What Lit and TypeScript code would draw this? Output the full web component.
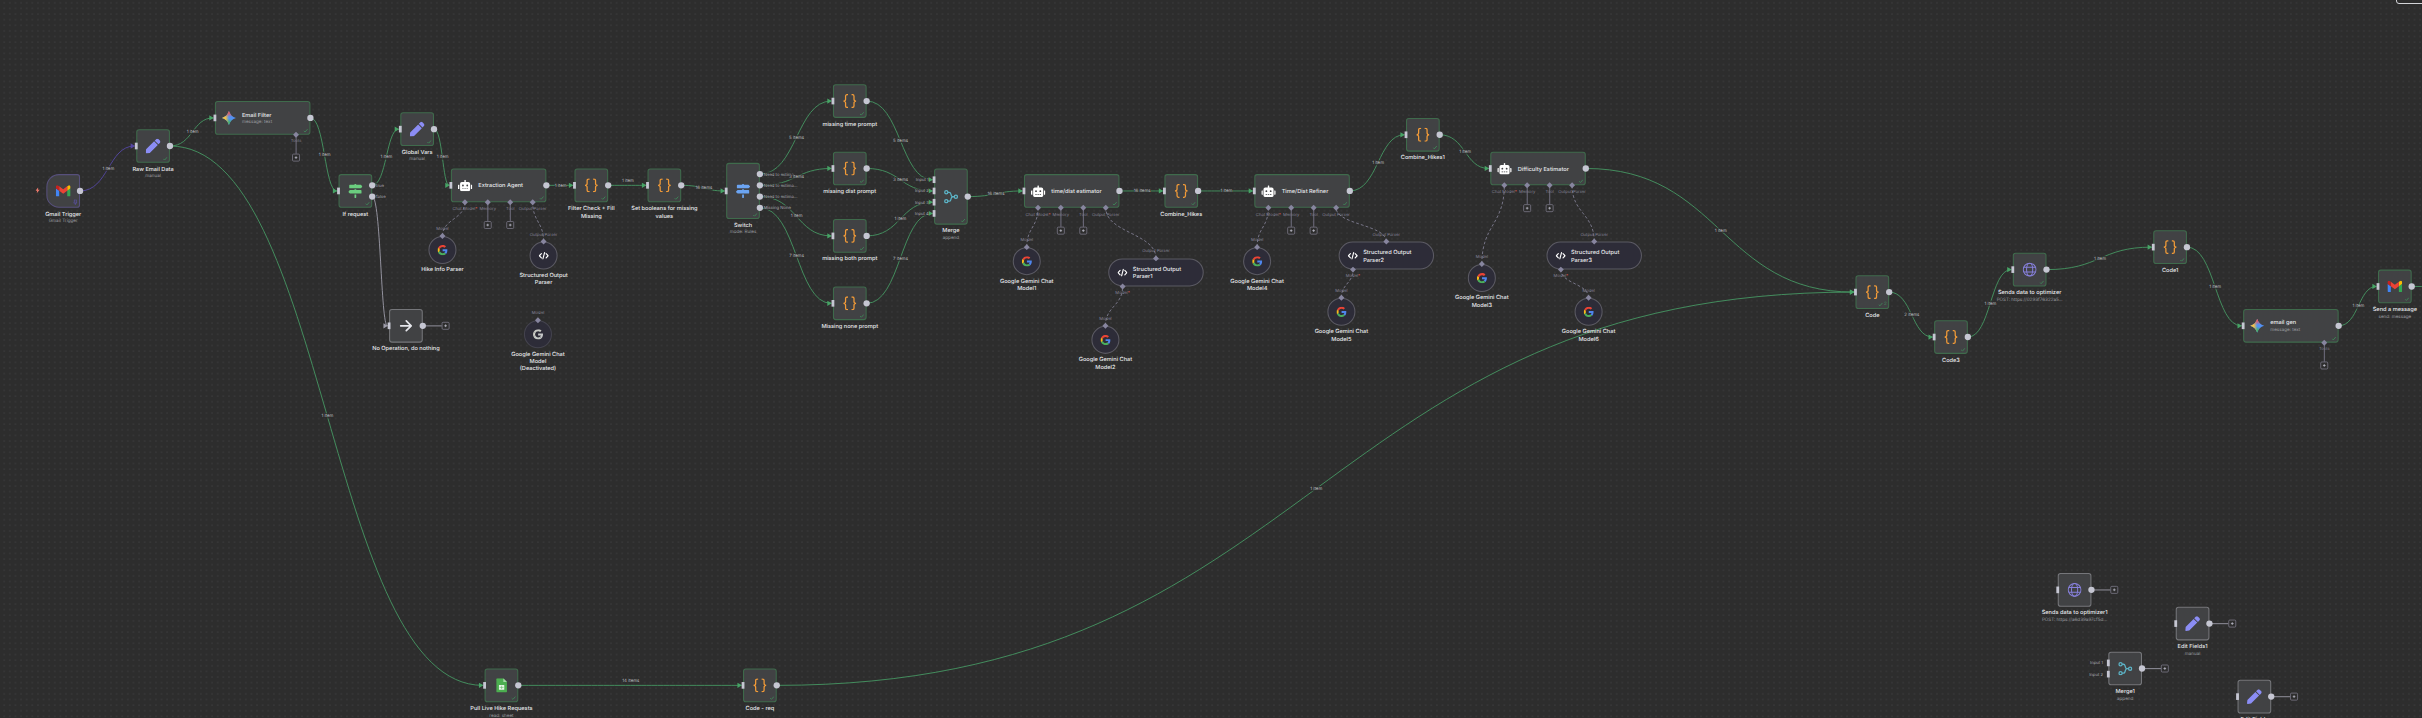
import { LitElement, html, svg, css, nothing, type TemplateResult } from "lit";
import { customElement, property } from "lit/decorators.js";
import { classMap } from "lit/directives/class-map.js";
import { styleMap } from "lit/directives/style-map.js";

const GRID = 16;
const SCALE = 0.35115;
const ORIGIN_X = 46.35;
const ORIGIN_Y = 174.1;

type Kind = "step" | "trigger" | "wide" | "circle" | "pill";
type Tone = "success" | "pinned" | "idle" | "off";

interface FlowNode {
  id: string;
  kind?: Kind;
  tone?: Tone;
  icon: string;
  x: number;
  y: number;
  h?: number;
  title: string;
  sub?: string;
  runs?: string;
  ins?: string[];
  outs?: string[];
  ports?: [number, string, boolean][];
  top?: string;
  plus?: boolean;
}

interface Edge {
  from: string;
  to: string;
  text?: string;
  out?: number;
  inp?: number;
  tone?: string;
  above?: boolean;
}

const AGENT: [number, string, boolean][] = [
  [40, "Chat Model*", false],
  [105, "Memory", true],
  [169, "Tool", true],
  [233, "Output Parser", false],
];
const TOOLS: [number, string, boolean][] = [[231, "Tools", true]];
const NEED = "Need to estima...";

const gem = (id: string, x: number, y: number, n: string): FlowNode => ({
  id, kind: "circle", icon: "google", x, y, title: `Google Gemini Chat\nModel${n}`, top: "Model",
});
const parser = (id: string, x: number, y: number, n: string): FlowNode => ({
  id, kind: "pill", icon: "code", x, y, title: `Structured Output\nParser${n}`, top: "Output Parser",
  ports: [[41, "Model*", false]],
});
const code = (id: string, x: number, y: number, title: string, runs = ""): FlowNode => ({
  id, icon: "braces", x, y, title, runs,
});

const NODES: FlowNode[] = [
  { id: "gmail", kind: "trigger", tone: "pinned", icon: "gmail", x: 0, y: 0, title: "Gmail Trigger", sub: "Gmail Trigger", ins: [] },
  { id: "raw", icon: "pen", x: 16, y: -8, title: "Raw Email Data", sub: "manual" },
  { id: "filter", kind: "wide", icon: "gemini", x: 30, y: -13, title: "Email Filter", sub: "message: text", ports: TOOLS },
  { id: "if", icon: "signsGreen", x: 52, y: 0, title: "If request", outs: ["true", "false"] },
  { id: "global", icon: "pen", x: 63, y: -11, title: "Global Vars", sub: "manual" },
  { id: "extract", kind: "wide", icon: "robot", x: 72, y: -1, title: "Extraction Agent", ports: AGENT },
  code("check", 94, -1, "Filter Check + Fill\nMissing"),
  code("bools", 107, -1, "Set booleans for missing\nvalues"),
  { id: "noop", tone: "idle", icon: "arrow", x: 61, y: 24, title: "No Operation, do nothing", plus: true },
  { id: "hike", kind: "circle", icon: "google", x: 68, y: 11, title: "Hike Info Parser", top: "Model" },
  { id: "sop", kind: "circle", icon: "code", x: 86, y: 12, title: "Structured Output\nParser", top: "Output Parser" },
  { id: "off", kind: "circle", tone: "off", icon: "googleOff", x: 85, y: 26, title: "Google Gemini Chat\nModel\n(Deactivated)", top: "Model" },
  { id: "switch", icon: "signsBlue", x: 121, y: -2, h: 160, title: "Switch", sub: "mode: Rules", outs: [NEED, NEED, NEED, "Missing None"] },
  code("mt", 140, -16, "missing time prompt"),
  code("md", 140, -4, "missing dist prompt"),
  code("mb", 140, 8, "missing both prompt"),
  code("mn", 140, 20, "Missing none prompt"),
  { id: "merge", icon: "merge", x: 158, y: -1, h: 160, title: "Merge", sub: "append", ins: ["Input 1", "Input 2", "Input 3", "Input 4"] },
  { id: "tde", kind: "wide", icon: "robot", x: 174, y: 0, title: "time/dist estimator", ports: AGENT },
  code("ch", 199, 0, "Combine_Hikes"),
  { id: "tdr", kind: "wide", icon: "robot", x: 215, y: 0, title: "Time/Dist Refiner", ports: AGENT },
  code("ch1", 242, -10, "Combine_Hikes1"),
  { id: "diff", kind: "wide", icon: "robot", x: 257, y: -4, title: "Difficulty Estimator", ports: AGENT },
  code("code", 322, 18, "Code", "2"),
  code("code3", 336, 26, "Code3"),
  { id: "send", icon: "globe", x: 350, y: 14, title: "Sends data to optimizer", sub: "POST: https://0293f76322a5..." },
  code("code1", 375, 10, "Code1"),
  { id: "gen", kind: "wide", icon: "gemini", x: 391, y: 24, title: "email gen", sub: "message: text", ports: TOOLS },
  { id: "msg", icon: "gmail", x: 415, y: 17, title: "Send a message", sub: "send: message" },
  { id: "send1", tone: "idle", icon: "globe", x: 358, y: 71, title: "Sends data to optimizer1", sub: "POST: https://a6d39a97cf5d...", plus: true },
  { id: "ef1", tone: "idle", icon: "pen", x: 379, y: 77, title: "Edit Fields1", sub: "manual", plus: true },
  { id: "merge1", tone: "idle", icon: "merge", x: 367, y: 85, title: "Merge1", sub: "append", ins: ["Input 1", "Input 2"], plus: true },
  { id: "ef", tone: "idle", icon: "pen", x: 390, y: 90, title: "Edit Fields", plus: true },
  { id: "sheet", icon: "sheet", x: 78, y: 88, title: "Pull Live Hike Requests", sub: "read: sheet" },
  code("req", 124, 88, "Code - req"),
  gem("m1", 172, 13, "1"),
  gem("m2", 186, 27, "2"),
  gem("m4", 213, 13, "4"),
  gem("m5", 228, 22, "5"),
  gem("m3", 253, 16, "3"),
  gem("m6", 272, 22, "6"),
  parser("p1", 189, 15, "1"),
  parser("p2", 230, 12, "2"),
  parser("p3", 267, 12, "3"),
  { id: "next", icon: "pen", x: 440, y: 17, title: "" },
];

const EDGES: Edge[] = [
  { from: "gmail", to: "raw", text: "1 item", tone: "pinned" },
  { from: "raw", to: "filter", text: "1 item" },
  { from: "raw", to: "sheet", text: "1 item" },
  { from: "filter", to: "if", text: "1 item" },
  { from: "if", to: "global", text: "1 item" },
  { from: "if", to: "noop", out: 1, tone: "idle" },
  { from: "global", to: "extract", text: "1 item" },
  { from: "extract", to: "check", text: "1 item" },
  { from: "check", to: "bools", text: "1 item", above: true },
  { from: "bools", to: "switch", text: "16 items" },
  { from: "switch", to: "mt", text: "5 items" },
  { from: "switch", to: "md", text: "3 items", out: 1 },
  { from: "switch", to: "mb", text: "1 item", out: 2 },
  { from: "switch", to: "mn", text: "7 items", out: 3 },
  { from: "mt", to: "merge", text: "5 items" },
  { from: "md", to: "merge", text: "3 items", inp: 1 },
  { from: "mb", to: "merge", text: "1 item", inp: 2 },
  { from: "mn", to: "merge", text: "7 items", inp: 3 },
  { from: "merge", to: "tde", text: "16 items" },
  { from: "tde", to: "ch", text: "16 items" },
  { from: "ch", to: "tdr", text: "1 item" },
  { from: "tdr", to: "ch1", text: "1 item" },
  { from: "ch1", to: "diff", text: "1 item" },
  { from: "diff", to: "code", text: "1 item" },
  { from: "sheet", to: "req", text: "14 items", above: true },
  { from: "req", to: "code", text: "1 item" },
  { from: "code", to: "code3", text: "2 items" },
  { from: "code3", to: "send", text: "1 item" },
  { from: "send", to: "code1", text: "1 item" },
  { from: "code1", to: "gen", text: "1 item" },
  { from: "gen", to: "msg", text: "1 item" },
  { from: "msg", to: "next" },
];

/* sub-node, parent, index of the parent's bottom port */
const LINKS: [string, string, number][] = [
  ["hike", "extract", 0], ["sop", "extract", 3],
  ["m1", "tde", 0], ["p1", "tde", 3], ["m2", "p1", 0],
  ["m4", "tdr", 0], ["p2", "tdr", 3], ["m5", "p2", 0],
  ["m3", "diff", 0], ["p3", "diff", 3], ["m6", "p3", 0],
];

const byId = new Map(NODES.map((n) => [n.id, n]));
const widthOf = (n: FlowNode) => (n.kind === "wide" || n.kind === "pill" ? 272 : n.kind === "circle" ? 80 : 96);
const heightOf = (n: FlowNode) => n.h ?? (n.kind === "circle" || n.kind === "pill" ? 80 : 96);
const slot = (n: FlowNode, i: number, count: number) => heightOf(n) / 2 + (i - (count - 1) / 2) * 32;
const outPos = (n: FlowNode, i = 0) => [n.x * GRID + widthOf(n), n.y * GRID + slot(n, i, n.outs?.length ?? 1)];
const inPos = (n: FlowNode, i = 0) => [n.x * GRID, n.y * GRID + slot(n, i, n.ins?.length || 1)];

const signs = (fill: string) => svg`<svg viewBox="0 0 512 512" width="40" height="40"><path fill=${fill} d="M507.31 84.69L464 41.37c-6-6-14.14-9.37-22.63-9.37H288V16c0-8.84-7.16-16-16-16h-32c-8.84 0-16 7.16-16 16v16H56c-13.25 0-24 10.75-24 24v80c0 13.25 10.75 24 24 24h385.37c8.49 0 16.62-3.37 22.63-9.37l43.31-43.31c6.25-6.26 6.25-16.38 0-22.63zM224 496c0 8.84 7.16 16 16 16h32c8.84 0 16-7.16 16-16V384h-64v112zm232-272H288v-32h-64v32H70.63c-8.49 0-16.62 3.37-22.63 9.37L4.69 276.69c-6.25 6.25-6.25 16.38 0 22.63L48 342.63c6 6 14.14 9.37 22.63 9.37H456c13.25 0 24-10.75 24-24v-80c0-13.25-10.75-24-24-24z"/></svg>`;

const google = (c: string[]) => svg`<svg viewBox="0 0 48 48" width="29" height="29">
  <path fill=${c[0]} d="M24 9.5c3.54 0 6.71 1.22 9.21 3.6l6.85-6.85C35.9 2.38 30.47 0 24 0 14.62 0 6.51 5.38 2.56 13.22l7.98 6.19C12.43 13.72 17.74 9.5 24 9.5z"/>
  <path fill=${c[1]} d="M46.98 24.55c0-1.57-.15-3.09-.38-4.55H24v9.02h12.94c-.58 2.96-2.26 5.48-4.78 7.18l7.73 6c4.51-4.18 7.09-10.36 7.09-17.65z"/>
  <path fill=${c[2]} d="M10.53 28.59c-.48-1.45-.76-2.99-.76-4.59s.27-3.14.76-4.59l-7.98-6.19C.92 16.46 0 20.12 0 24c0 3.88.92 7.54 2.56 10.78l7.97-6.19z"/>
  <path fill=${c[3]} d="M24 48c6.48 0 11.93-2.13 15.89-5.81l-7.73-6c-2.15 1.45-4.92 2.3-8.16 2.3-6.26 0-11.57-4.22-13.47-9.91l-7.98 6.19C6.51 42.62 14.62 48 24 48z"/></svg>`;

const ICONS: Record<string, TemplateResult> = {
  signsGreen: signs("#6bcd7f"),
  signsBlue: signs("#6ba4f2"),
  google: google(["#ea4335", "#4f86ee", "#f6ba1c", "#4aae5c"]),
  googleOff: google(["#c8cac4", "#c4c6c6", "#cfd0c8", "#c4c8c4"]),
  pen: svg`<svg viewBox="0 0 512 512" width="42" height="42"><path fill="#8b8df5" d="M290.74 93.24l128.02 128.02-277.99 277.99-114.14 12.6C11.35 513.54-1.56 500.62.14 485.34l12.7-114.22 277.9-277.88zm207.2-19.06l-60.11-60.11c-18.75-18.75-49.16-18.75-67.91 0l-56.55 56.55 128.02 128.02 56.55-56.55c18.75-18.76 18.75-49.16 0-67.91z"/></svg>`,
  robot: svg`<svg viewBox="0 0 640 512" width="41" height="33"><path fill="#fff" d="M32,224H64V416H32A31.96,31.96,0,0,1,0,384V256A31.96,31.96,0,0,1,32,224Zm512-48V448a64.06,64.06,0,0,1-64,64H160a64.06,64.06,0,0,1-64-64V176a79.974,79.974,0,0,1,80-80H288V32a32,32,0,0,1,64,0V96H464A79.974,79.974,0,0,1,544,176ZM264,256a40,40,0,1,0-40,40A39.997,39.997,0,0,0,264,256Zm-8,128H192v32h64Zm96,0H288v32h64ZM456,256a40,40,0,1,0-40,40A39.997,39.997,0,0,0,456,256Zm-8,128H384v32h64ZM640,256V384a31.96,31.96,0,0,1-32,32H576V224h32A31.96,31.96,0,0,1,640,256Z"/></svg>`,
  braces: svg`<svg viewBox="0 0 40 40" width="40" height="40"><path fill="none" stroke="#f29b38" stroke-width="3.6" d="M15 2h-3q-4 0-4 4v8.500q0 5.500-6 5.500q6 0 6 5.500V34q0 4 4 4h3M25 2h3q4 0 4 4v8.500q0 5.500 6 5.500q-6 0-6 5.500V34q0 4-4 4h-3"/></svg>`,
  code: svg`<svg viewBox="0 0 30 24" width="29" height="23"><path fill="none" stroke="#fff" stroke-width="3.4" stroke-linecap="round" stroke-linejoin="round" d="M8 5.500L2 12l6 6.500M22 5.500l6 6.500l-6 6.500M17.500 2.500l-5 19"/></svg>`,
  arrow: svg`<svg viewBox="0 0 36 36" width="36" height="36"><path fill="none" stroke="#e6e7ec" stroke-width="4.800" stroke-linecap="round" stroke-linejoin="round" d="M3 18h29M19 4l14 14l-14 14"/></svg>`,
  globe: svg`<svg viewBox="0 0 40 40" width="40" height="40"><g fill="none" stroke="#8780dc" stroke-width="2.900"><circle cx="20" cy="20" r="18.300"/><ellipse cx="20" cy="20" rx="8.800" ry="18.300"/><path d="M3.500 13.500h33M3.500 26.500h33"/></g></svg>`,
  merge: svg`<svg viewBox="0 0 42 40" width="41" height="39"><g fill="none" stroke="#5cb3c6" stroke-width="3.800"><circle cx="7" cy="7" r="4.600"/><circle cx="7" cy="33" r="4.600"/><circle cx="35" cy="20" r="4.600"/><path d="M11.500 7h4q3.500 0 4.500 4l1.500 5q1 4 5 4h4M11.500 33h4q3.500 0 4.500-4l1.500-5q1-4 5-4"/></g></svg>`,
  gmail: svg`<svg viewBox="52 42 88 66" width="42" height="31.500"><path fill="#4285f4" d="M58 108h14V74L52 59v43c0 3.320 2.690 6 6 6"/><path fill="#34a853" d="M120 108h14c3.320 0 6-2.690 6-6V59l-20 15"/><path fill="#fbbc04" d="M120 48v26l20-15v-8c0-7.420-8.470-11.650-14.400-7.200"/><path fill="#ea4335" d="M72 74V48l24 18 24-18v26L96 92"/><path fill="#c5221f" d="M52 51v8l20 15V48l-5.600-4.200c-5.940-4.450-14.400-.22-14.400 7.200"/></svg>`,
  gemini: svg`<svg viewBox="0 0 40 40" width="40" height="40"><defs>
    <linearGradient id="gr" x1="20" y1="0" x2="20" y2="17" gradientUnits="userSpaceOnUse"><stop offset=".3" stop-color="#f0574f"/><stop offset="1" stop-color="#f0574f" stop-opacity="0"/></linearGradient>
    <linearGradient id="gy" x1="0" y1="20" x2="20" y2="20" gradientUnits="userSpaceOnUse"><stop offset=".5" stop-color="#f4c044"/><stop offset="1" stop-color="#f4c044" stop-opacity="0"/></linearGradient>
    <linearGradient id="gg" x1="18" y1="40" x2="22" y2="22" gradientUnits="userSpaceOnUse"><stop offset=".4" stop-color="#45b06a"/><stop offset="1" stop-color="#45b06a" stop-opacity="0"/></linearGradient></defs>
    ${["#5190f4", "url(#gg)", "url(#gy)", "url(#gr)"].map((f) => svg`<path fill=${f} d="M20 0Q24.500 15.500 40 20Q24.500 24.500 20 40Q15.500 24.500 0 20Q15.500 15.500 20 0z"/>`)}</svg>`,
  sheet: svg`<svg viewBox="0 0 32 42" width="31" height="40"><path fill="#4cae50" d="M3 0h18l11 11v28q0 3-3 3H3q-3 0-3-3V3q0-3 3-3z"/><path fill="#a5d9a7" d="M21 0l11 11H21z"/><rect x="8" y="20" width="16" height="14" rx="1" fill="#e8f5e8"/><path stroke="#4cae50" stroke-width="1.500" d="M10 27h12M16 22v10"/></svg>`,
};

const PLUS = svg`<svg viewBox="0 0 10 10" width="10" height="10"><path stroke="#c6c5d2" stroke-width="2" d="M5 1v8M1 5h8"/></svg>`;

@customElement("flow-node")
class FlowNodeElement extends LitElement {
  @property({ attribute: false }) node!: FlowNode;

  static styles = css`
    :host { display: block; position: relative; }
    .card {
      box-sizing: border-box; width: 100%; height: 100%;
      display: flex; align-items: center; justify-content: center;
      background: #414244; border: 3px solid #3f6b4c; border-radius: 8px;
    }
    .card svg { display: block; flex: none; }
    .idle { border-color: #75767a; }
    .pinned { border-color: #57507c; border-radius: 36px 8px 8px 36px; }
    .wide, .pill { justify-content: flex-start; gap: 17px; padding-left: 17px; }
    .circle, .pill { background: #2d2c38; border-color: #5b5a63; border-radius: 50px; }
    .pill { padding-left: 23px; gap: 15px; }
    .off { border-color: #44434e; }
    .title { font-size: 16px; line-height: 22px; font-weight: 550; color: #e8e9ec; white-space: pre; }
    .sub { font-size: 13px; line-height: 20px; color: #9c9da1; white-space: pre; }
    .caption {
      position: absolute; top: calc(100% + 5px); left: 50%; width: max-content;
      transform: translateX(-50%); text-align: center;
    }
    .circleCaption .title { line-height: 21px; }
    .status {
      position: absolute; right: 7px; bottom: 7px; display: flex; align-items: center; gap: 3px;
      font-size: 13px; line-height: 14px; color: #3f9a5d;
    }
    .out, .in, .diamond { position: absolute; background: #c5c6d2; transform: translate(-50%, -50%); }
    .out { width: 18px; height: 18px; border-radius: 50%; left: 100%; }
    .in { width: 8px; height: 19px; left: 0; }
    .diamond { width: 12px; height: 12px; background: #87859f; transform: translate(-50%, -50%) rotate(45deg); }
    .portText { position: absolute; font-size: 12px; line-height: 14px; color: #858396; white-space: pre; transform: translate(-50%, -50%); }
    .portText.side { color: #acacb5; background: #2d2d2dcc; transform: translateY(-50%); }
    .left { right: calc(100% + 15px); }
    .right { left: calc(100% + 11px); }
    .req { color: #e0605a; }
    .stem { position: absolute; background: #6d6b7b; }
    .stem.v { width: 2.500px; height: 54px; transform: translateX(-50%); top: 100%; }
    .stem.h { height: 2.500px; width: 54px; transform: translateY(-50%); left: 100%; top: 50%; background: #8d8c97; }
    .plus {
      position: absolute; box-sizing: border-box; width: 22px; height: 22px; border: 2.500px solid #858394; border-radius: 4px;
      display: grid; place-items: center; transform: translate(-50%, -50%); background: #2d2d2d;
    }
    .plus svg { display: block; }
    .bolt { position: absolute; left: -31px; top: 38px; }
  `;

  private label(text: string) {
    return text.endsWith("*") ? html`${text.slice(0, -1)}<span class="req">*</span>` : text;
  }

  render() {
    const n = this.node;
    const kind = n.kind ?? "step";
    const tone = n.tone ?? "success";
    const sub = kind === "circle" || kind === "pill";
    const inside = kind === "wide" || kind === "pill";
    const text = html`<div class="title">${n.title}</div>${n.sub ? html`<div class="sub">${n.sub}</div>` : nothing}`;
    const outs = n.outs ?? [""];
    const ins = n.ins ?? [""];
    return html`
      ${n.plus ? html`<div class="stem h"></div><div class="plus" style="left:calc(100% + 65px);top:50%">${PLUS}</div>` : nothing}
      ${(n.ports ?? []).map(([x, , add]) => (add ? html`<div class="stem v" style="left:${x}px"></div><div class="plus" style="left:${x}px;top:calc(100% + 65px)">${PLUS}</div>` : nothing))}
      <div class=${classMap({ card: true, [kind]: true, [tone]: !sub || tone === "off" })}>
        ${ICONS[n.icon]} ${inside ? html`<div>${text}</div>` : nothing}
      </div>
      ${inside ? nothing : html`<div class=${classMap({ caption: true, circleCaption: kind === "circle" })}>${text}</div>`}
      ${!sub && tone === "success"
        ? html`<div class="status"><svg viewBox="0 0 14 12" width="13" height="11"><path fill="none" stroke="#3f9a5d" stroke-width="2.200" d="M1 7l4 4l8-9"/></svg>${n.runs || nothing}</div>`
        : nothing}
      ${tone === "pinned"
        ? html`<div class="status"><svg viewBox="0 0 14 18" width="13" height="17"><path fill="none" stroke="#5d51a8" stroke-width="2.200" d="M3 1h8M4 1v7l-2 3h10l-2-3V1M7 11v6"/></svg></div>
            <div class="bolt"><svg viewBox="0 0 14 18" width="13" height="17"><path fill="#e8776a" d="M8 0L0 10h5l-1 8l9-11H8z"/></svg></div>`
        : nothing}
      ${sub ? nothing : outs.map((o, i) => html`
        ${o ? html`<div class="portText side right" style="top:${slot(n, i, outs.length)}px">${o}</div>` : nothing}
        <div class="out" style="top:${slot(n, i, outs.length)}px"></div>`)}
      ${sub ? nothing : ins.map((o, i) => html`
        ${o ? html`<div class="portText side left" style="top:${slot(n, i, ins.length)}px">${o}</div>` : nothing}
        <div class="in" style="top:${slot(n, i, ins.length)}px"></div>`)}
      ${n.top ? html`<div class="portText" style="left:50%;top:-21px">${n.top}</div><div class="diamond" style="left:50%;top:0"></div>` : nothing}
      ${(n.ports ?? []).map(([x, t]) => html`
        <div class="portText" style="left:${x}px;top:calc(100% + 18px)">${this.label(t)}</div>
        <div class="diamond" style="left:${x}px;top:100%"></div>`)}
    `;
  }
}

@customElement("app-root")
class AppRoot extends LitElement {
  static styles = css`
    :host {
      display: block; position: relative; width: 100%; height: 718px; overflow: hidden;
      background: #2d2d2d; font-family: Inter, "Liberation Sans", sans-serif;
      text-rendering: geometricPrecision;
    }
    .dots { position: absolute; inset: 0; width: 100%; height: 100%; }
    .world { position: absolute; left: 0; top: 0; transform-origin: 0 0; }
    .edges { position: absolute; left: 0; top: 0; width: 1px; height: 1px; overflow: visible; }
    .edges path { fill: none; stroke-width: 2.600; }
    .success { stroke: #459662; }
    .pinned { stroke: #5547a3; }
    .idle { stroke: #9c9ba8; }
    .edges .link { stroke: #817f94; stroke-width: 2.500; stroke-dasharray: 8 6; }
    .edges .head { stroke: none; fill: #46a365; }
    .edges .head.pinned { fill: #5547a3; }
    .edges .head.idle { fill: #9c9ba8; }
    .count {
      position: absolute; transform: translate(-50%, -50%); white-space: pre;
      font-size: 12.500px; line-height: 15px; color: #b8b9bf; background: #2d2d2dbb;
    }
    flow-node { position: absolute; }
    .panel {
      position: absolute; right: -8px; top: -30px; width: 34px; height: 34px; box-sizing: border-box;
      border: 1px solid #d3d4d8; border-radius: 3px; background: #2d2d2d;
    }
  `;

  private geometry(e: Edge) {
    const [sx, sy] = outPos(byId.get(e.from)!, e.out);
    const [px, ty] = inPos(byId.get(e.to)!, e.inp);
    const tx = px - 5;
    return { sx, sy, tx, ty, mid: (sx + tx) / 2 + 3 };
  }

  render() {
    const step = GRID * SCALE;
    return html`
      <svg class="dots">
        <defs><pattern id="grid" patternUnits="userSpaceOnUse" x=${ORIGIN_X} y=${ORIGIN_Y} width=${step} height=${step}>
          <circle cx=${step / 2} cy=${step / 2} r="0.550" fill="#505052"></circle>
        </pattern></defs>
        <rect width="100%" height="100%" fill="url(#grid)"></rect>
      </svg>
      <div class="world" style=${styleMap({ transform: `translate(${ORIGIN_X}px, ${ORIGIN_Y}px) scale(${SCALE})` })}>
        <svg class="edges">
          ${LINKS.map(([c, p, i]) => {
            const child = byId.get(c)!;
            const parent = byId.get(p)!;
            const sx = child.x * GRID + widthOf(child) / 2;
            const sy = child.y * GRID;
            const tx = parent.x * GRID + parent.ports![i][0];
            const ty = parent.y * GRID + heightOf(parent);
            const my = (sy + ty) / 2;
            return svg`<path class="link" d="M${sx} ${sy}C${sx} ${my} ${tx} ${my} ${tx} ${ty}"/>`;
          })}
          ${EDGES.map((e) => {
            const { sx, sy, tx, ty, mid } = this.geometry(e);
            const tone = e.tone ?? "success";
            return svg`<path class=${tone} d="M${sx} ${sy}C${mid} ${sy} ${mid} ${ty} ${tx} ${ty}"/>
              <path class="head ${tone}" d="M${tx - 11} ${ty - 7.5}L${tx + 2} ${ty}L${tx - 11} ${ty + 7.5}z"/>`;
          })}
        </svg>
        ${NODES.map((n) => html`<flow-node .node=${n} style=${styleMap({
          left: `${n.x * GRID}px`, top: `${n.y * GRID}px`, width: `${widthOf(n)}px`, height: `${heightOf(n)}px`,
        })}></flow-node>`)}
        ${EDGES.filter((e) => e.text).map((e) => {
          const { sy, ty, mid } = this.geometry(e);
          return html`<div class="count" style=${styleMap({ left: `${mid}px`, top: `${(sy + ty) / 2 - (e.above ? 14 : 0)}px` })}>${e.text}</div>`;
        })}
      </div>
      <div class="panel"></div>
    `;
  }
}
